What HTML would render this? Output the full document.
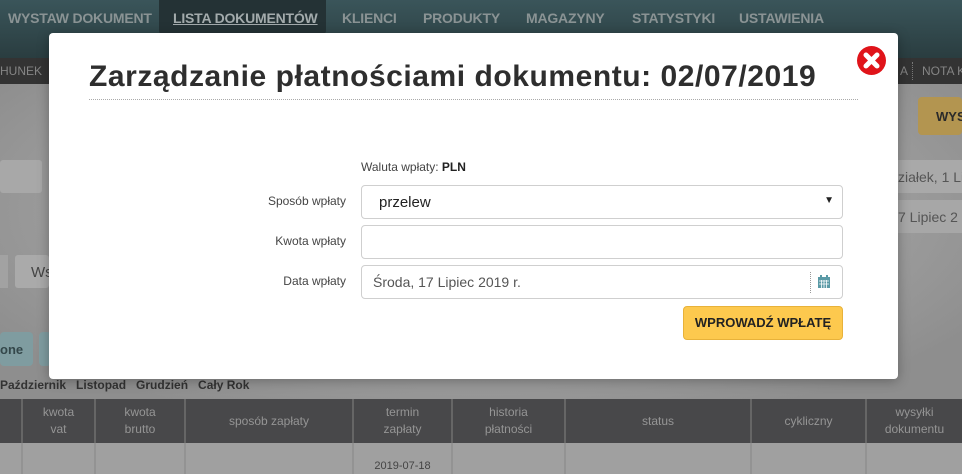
<!DOCTYPE html>
<html><head><meta charset="utf-8"><style>
*{margin:0;padding:0;box-sizing:border-box}
body{width:962px;height:474px;overflow:hidden;position:relative;font-family:"Liberation Sans",sans-serif;background:#9a9a9a}
.abs{position:absolute}
.nav{left:0;top:0;width:962px;height:58px;background:linear-gradient(180deg,#3a555a,#2a3d40)}
.nav span{position:absolute;top:10px;font-weight:bold;font-size:14px;color:#8a9394;letter-spacing:-0.2px}
.sub{left:0;top:58px;width:962px;height:26px;background:#333;font-size:12px;color:#858585;white-space:nowrap}
.bg{left:0;top:84px;width:962px;height:315px;background:radial-gradient(ellipse at 50% 40%,#bdbdbd,#8e8e8e 85%)}
.modal{left:49px;top:33px;width:849px;height:346px;background:#fff;border-radius:4px;box-shadow:0 2px 12px rgba(0,0,0,.3)}
.title{left:89px;top:60px;font-size:30px;font-weight:bold;color:#2e2e2e;letter-spacing:0.55px;white-space:nowrap}
.lbl{font-size:12px;color:#444;text-align:right;width:120px;left:226px}
.inp{left:361px;width:482px;height:34px;border:1px solid #cfcfcf;border-radius:4px;background:#fff;font-size:14px;color:#333}
.th{top:399px;height:44px;background:#48484a;color:#959595;font-size:12px;text-align:center;line-height:17px;display:flex;align-items:center;justify-content:center;border-right:2px solid #666}
.td{top:443px;height:31px;background:#a0a0a0;border-right:2px solid #939393}
</style></head><body>
<div class="abs nav">
<div class="abs" style="left:159px;top:0;width:167px;height:34px;background:#243235;border-radius:0 0 3px 3px"></div>
<span style="left:8px">WYSTAW DOKUMENT</span>
<span style="left:173px;color:#a3abac;text-decoration:underline">LISTA DOKUMENTÓW</span>
<span style="left:342px">KLIENCI</span>
<span style="left:423px">PRODUKTY</span>
<span style="left:526px">MAGAZYNY</span>
<span style="left:632px">STATYSTYKI</span>
<span style="left:739px">USTAWIENIA</span>
</div>
<div class="abs sub"><span class="abs" style="left:0;top:6px">HUNEK</span><span class="abs" style="left:900px;top:6px">A</span><span class="abs" style="left:912px;top:4px;height:18px;border-left:1px dotted #777"></span><span class="abs" style="left:922px;top:6px">NOTA K</span></div>
<div class="abs bg"></div>
<div class="abs" style="left:0;top:160px;width:42px;height:33px;background:#a8a8a8;border-radius:3px"></div>
<div class="abs" style="left:0;top:255px;width:8px;height:33px;background:#a2a2a2"></div>
<div class="abs" style="left:15px;top:255px;width:34px;height:33px;background:#aaa;border-radius:3px;font-size:15px;color:#444;padding:9px 0 0 16px">Ws</div>
<div class="abs" style="left:0;top:332px;width:33px;height:34px;background:#7f9ca0;border-radius:4px;font-weight:bold;font-size:13px;color:#34474a;padding:10px 0 0 0">one</div>
<div class="abs" style="left:39px;top:332px;width:12px;height:34px;background:#7f9ca0;border-radius:4px"></div>
<div class="abs" style="left:918px;top:97px;width:44px;height:38px;background:#b39550;border-radius:4px;font-weight:bold;font-size:13px;color:#2a2a2a;padding:12px 0 0 18px">WYS</div>
<div class="abs" style="left:898px;top:160px;width:64px;height:33px;background:#a9a9a9;font-size:14px;color:#555;padding:9px 0 0 0;white-space:nowrap;overflow:hidden">ziałek, 1 Lip</div>
<div class="abs" style="left:898px;top:200px;width:64px;height:33px;background:#a7a7a7;font-size:14px;color:#555;padding:9px 0 0 0;white-space:nowrap;overflow:hidden">7 Lipiec 2</div>
<div class="abs" style="left:0;top:378px;font-size:12px;font-weight:bold;color:#333;white-space:nowrap">Październik&nbsp;&nbsp;&nbsp;Listopad&nbsp;&nbsp;&nbsp;Grudzień&nbsp;&nbsp;&nbsp;Cały Rok</div>
<div class="abs th" style="left:0;width:23px"></div>
<div class="abs th" style="left:23px;width:73px">kwota<br>vat</div>
<div class="abs th" style="left:96px;width:90px">kwota<br>brutto</div>
<div class="abs th" style="left:186px;width:168px">sposób zapłaty</div>
<div class="abs th" style="left:354px;width:99px">termin<br>zapłaty</div>
<div class="abs th" style="left:453px;width:113px">historia<br>płatności</div>
<div class="abs th" style="left:566px;width:186px">status</div>
<div class="abs th" style="left:752px;width:115px">cykliczny</div>
<div class="abs th" style="left:867px;width:95px;border:0">wysyłki<br>dokumentu</div>
<div class="abs td" style="left:0;width:23px"></div>
<div class="abs td" style="left:23px;width:73px"></div>
<div class="abs td" style="left:96px;width:90px"></div>
<div class="abs td" style="left:186px;width:168px"></div>
<div class="abs td" style="left:354px;width:99px;font-size:11px;color:#444;text-align:center;padding-top:17px">2019-07-18</div>
<div class="abs td" style="left:453px;width:113px"></div>
<div class="abs td" style="left:566px;width:186px"></div>
<div class="abs td" style="left:752px;width:115px"></div>
<div class="abs td" style="left:867px;width:95px;border:0"></div>

<div class="abs modal"></div>
<div class="abs title">Zarządzanie płatnościami dokumentu: 02/07/2019</div>
<div class="abs" style="left:89px;top:99px;width:769px;border-top:1px dotted #aaa"></div>
<svg class="abs" style="left:856px;top:45px" width="31" height="31" viewBox="0 0 31 31"><circle cx="15.5" cy="15.5" r="14.5" fill="#e0141a"/><path d="M10 10L21 21M21 10L10 21" stroke="#fff" stroke-width="5" stroke-linecap="round"/></svg>
<div class="abs" style="left:361px;top:160px;font-size:12px;color:#444">Waluta wpłaty: <b style="color:#222">PLN</b></div>
<div class="abs lbl" style="top:194px">Sposób wpłaty</div>
<div class="abs lbl" style="top:234px">Kwota wpłaty</div>
<div class="abs lbl" style="top:274px">Data wpłaty</div>
<div class="abs inp" style="top:185px;padding:8px 0 0 17px;font-size:15px;color:#222">przelew<span class="abs" style="right:8px;top:9px;font-size:10px">▼</span></div>
<div class="abs inp" style="top:225px"></div>
<div class="abs inp" style="top:265px;padding:8px 0 0 11px;color:#555">Środa, 17 Lipiec 2019 r.
<span class="abs" style="left:448px;top:6px;height:21px;border-left:1px dotted #999"></span>
<svg class="abs" style="left:455px;top:9px" width="14" height="14" viewBox="0 0 14 14"><rect x="1" y="2" width="12" height="11" fill="#5a9aa6"/><rect x="3" y="0" width="2" height="3" fill="#5a9aa6"/><rect x="9" y="0" width="2" height="3" fill="#5a9aa6"/><path d="M2 6H12M2 9H12M4.5 5V13M7 5V13M9.5 5V13" stroke="#fff" stroke-width="0.8"/></svg></div>
<div class="abs" style="left:683px;top:306px;width:160px;height:34px;background:#fdc94e;border:1px solid #e8b23a;border-radius:4px;font-weight:bold;font-size:13px;color:#222;text-align:center;line-height:32px">WPROWADŹ WPŁATĘ</div>
</body></html>
